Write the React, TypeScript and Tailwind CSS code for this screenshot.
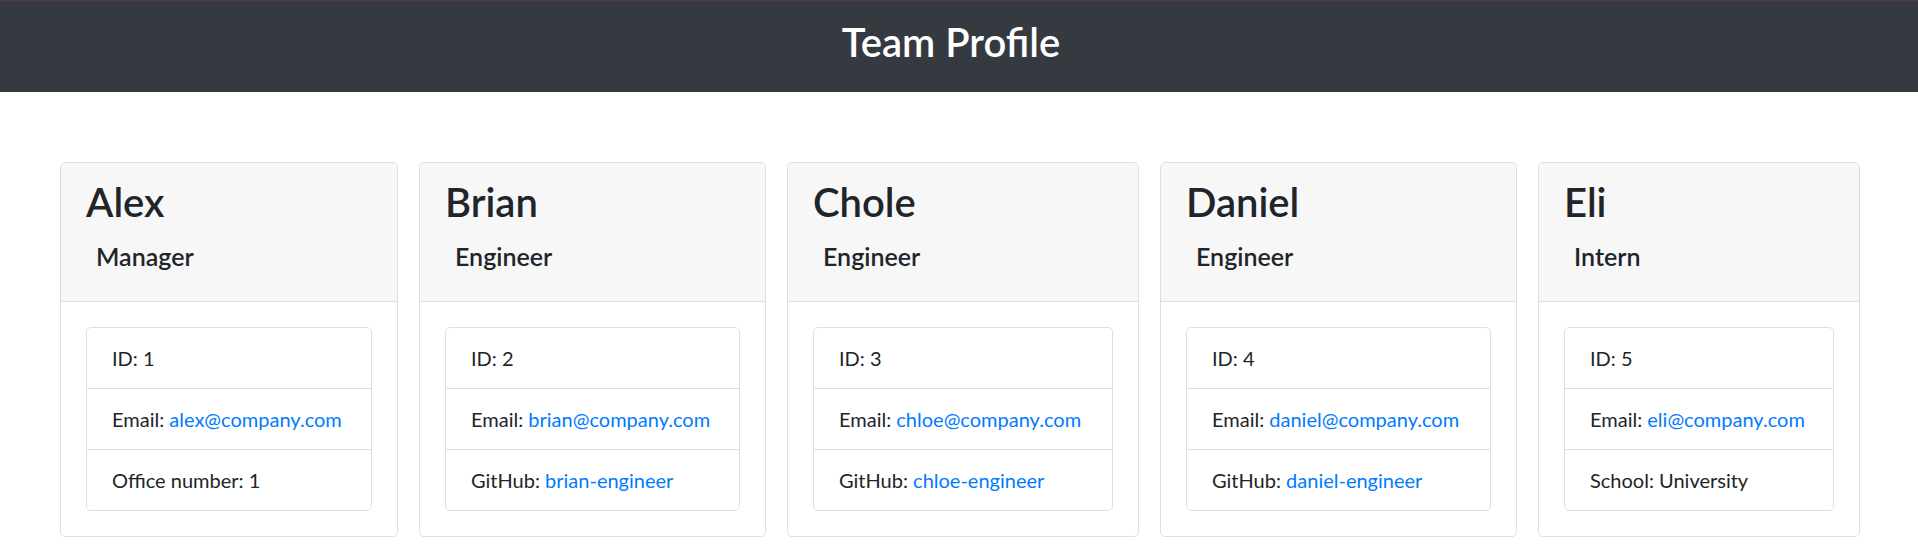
import React from 'react';

type Member = {
  name: string;
  role: string;
  id: number;
  email: string;
  extraLabel: string;
  extraValue: string;
  extraIsLink: boolean;
  width: string;
};

const team: Member[] = [
  { name: 'Alex', role: 'Manager', id: 1, email: 'alex@company.com', extraLabel: 'Office number', extraValue: '1', extraIsLink: false, width: 'w-[338px]' },
  { name: 'Brian', role: 'Engineer', id: 2, email: 'brian@company.com', extraLabel: 'GitHub', extraValue: 'brian-engineer', extraIsLink: true, width: 'w-[347px]' },
  { name: 'Chole', role: 'Engineer', id: 3, email: 'chloe@company.com', extraLabel: 'GitHub', extraValue: 'chloe-engineer', extraIsLink: true, width: 'w-[352px]' },
  { name: 'Daniel', role: 'Engineer', id: 4, email: 'daniel@company.com', extraLabel: 'GitHub', extraValue: 'daniel-engineer', extraIsLink: true, width: 'w-[357px]' },
  { name: 'Eli', role: 'Intern', id: 5, email: 'eli@company.com', extraLabel: 'School', extraValue: 'University', extraIsLink: false, width: 'w-[322px]' },
];

const MemberCard: React.FC<{ member: Member }> = ({ member }) => {
  return (
    <div className={`${member.width} shrink-0 bg-white border border-[#dfdfdf] rounded-[5px] overflow-hidden`}>
      <div className="bg-[#f7f7f7] border-b border-[#dfdfdf] px-[25px] py-[15px]">
        <h2 className="text-[40px] leading-[48px] font-semibold text-[#212529] mb-[15px]">{member.name}</h2>
        <h5 className="text-[25px] leading-[30px] font-semibold text-[#212529] pl-[10px] mb-[15px]">{member.role}</h5>
      </div>
      <div className="p-[25px]">
        <ul className="border border-[#dfdfdf] rounded-[5px] text-[20px] leading-[30px] text-[#212529]">
          <li className="px-[25px] py-[15px]">ID: {member.id}</li>
          <li className="px-[25px] py-[15px] border-t border-[#dfdfdf]">
            Email: <a href={`mailto:${member.email}`} className="text-[#007bff]">{member.email}</a>
          </li>
          <li className="px-[25px] py-[15px] border-t border-[#dfdfdf]">
            {member.extraLabel}:{' '}
            {member.extraIsLink ? (
              <a href="#" className="text-[#007bff]">{member.extraValue}</a>
            ) : (
              member.extraValue
            )}
          </li>
        </ul>
      </div>
    </div>
  );
};

export default function App() {
  return (
    <div className="min-h-screen bg-white font-['Lato','Noto_Sans',sans-serif]">
      <header className="h-[92px] bg-[#343a40] border-t border-[#58344e] flex items-center justify-center pr-[16px] pb-[9px]">
        <h1 className="text-[40px] leading-[48px] font-semibold text-white">Team Profile</h1>
      </header>
      <main className="flex gap-[21px] pl-[60px] pt-[70px]">
        {team.map((m) => (
          <MemberCard key={m.id} member={m} />
        ))}
      </main>
    </div>
  );
}
